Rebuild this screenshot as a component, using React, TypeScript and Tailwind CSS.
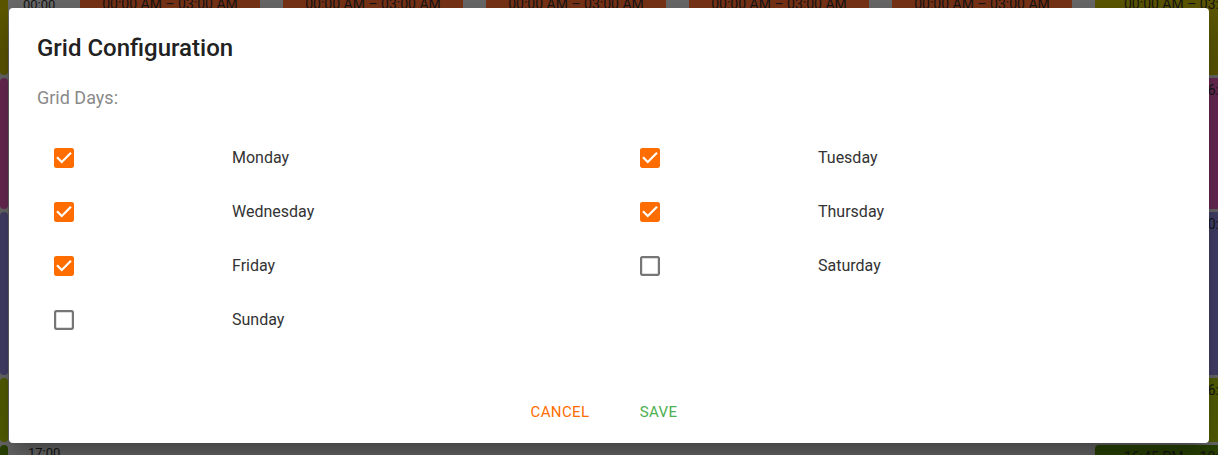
import { useState } from 'react';

const days = [
  { name: 'Monday', on: true },
  { name: 'Tuesday', on: true },
  { name: 'Wednesday', on: true },
  { name: 'Thursday', on: true },
  { name: 'Friday', on: true },
  { name: 'Saturday', on: false },
  { name: 'Sunday', on: false },
];

function CheckIcon({ checked }: { checked: boolean }) {
  if (checked) {
    return (
      <svg viewBox="3 3 18 18" width="20" height="20" className="text-[#ff6d00]" fill="currentColor">
        <path d="M19 3H5c-1.11 0-2 .9-2 2v14c0 1.1.89 2 2 2h14c1.11 0 2-.9 2-2V5c0-1.1-.89-2-2-2zm-9 14l-5-5 1.41-1.41L10 14.17l7.59-7.59L19 8l-9 9z" />
      </svg>
    );
  }
  return (
    <svg viewBox="3 3 18 18" width="20" height="20" className="text-[#767676]" fill="currentColor">
      <path d="M19 5v14H5V5h14m0-2H5c-1.1 0-2 .9-2 2v14c0 1.1.9 2 2 2h14c1.1 0 2-.9 2-2V5c0-1.1-.9-2-2-2z" />
    </svg>
  );
}

// 背景里被遮住的排班表
function StripColumn({ withText }: { withText?: boolean }) {
  const cells = [
    { h: 'h-[83px]', bg: 'bg-[#5e5800]', a: '00:00 AM – 03:00 AM', b: 'TOTAL' },
    { h: 'h-[131px]', bg: 'bg-[#6c2a55]', a: '03:00 AM – 06:00', b: 'Posts' },
    { h: 'h-[163px]', bg: 'bg-[#45416c]', a: '06:15 AM – 10:15', b: 'daily' },
    { h: 'h-[64px]', bg: 'bg-[#566000]', a: '10:45 AM – 16:45', b: 'NIGHT' },
    { h: 'h-[40px]', bg: 'bg-[#2b4500]', a: '16:45 PM – 10:15', b: '' },
  ];
  return (
    <div className="flex flex-col gap-[3px]">
      {cells.map((c, i) => (
        <div key={i} className={`${c.h} ${c.bg} rounded-[4px] overflow-hidden text-[14px] leading-[19px] text-[#161616]`}>
          {withText && (
            <div className="pl-[29px] pt-[3px] whitespace-nowrap">
              <div>{c.a}</div>
              <div>{c.b}</div>
            </div>
          )}
        </div>
      ))}
    </div>
  );
}

function BrownColumn() {
  return (
    <div className="w-[180px] shrink-0 flex flex-col gap-[3px]">
      <div className="h-[200px] bg-[#7b3418] rounded-[4px] text-center text-[14px] leading-[19px] pt-[3px] text-[#161616] whitespace-nowrap">
        00:00 AM – 03:00 AM
      </div>
      <div className="h-[70px] bg-[#7b3418] rounded-[4px]" />
      <div className="h-[170px] bg-[#4b3700] rounded-[4px]" />
    </div>
  );
}

export default function App() {
  const [checked, setChecked] = useState(days.map((d) => d.on));

  return (
    <div className="relative w-[1218px] h-[455px] overflow-hidden bg-[#6b6b6b] font-['Roboto',_'Liberation_Sans',_sans-serif]">
      {/* 背景网格 */}
      <div className="flex -mt-[8px]">
        <div className="w-[8px] shrink-0 overflow-hidden flex justify-end">
          <div className="w-[8px] shrink-0">
            <StripColumn />
          </div>
        </div>
        <div className="w-[72px] shrink-0 flex flex-col justify-between h-[471px] text-[13px] leading-[20px] text-[#161616]">
          <div className="pl-[15px] pt-[3px]">00:00</div>
          <div className="pl-[20px]">17:00</div>
        </div>
        <div className="flex shrink-0 gap-[23px]">
          <BrownColumn />
          <BrownColumn />
          <BrownColumn />
          <BrownColumn />
          <BrownColumn />
          <div className="w-[180px] shrink-0">
            <StripColumn withText />
          </div>
        </div>
      </div>

      {/* 弹窗 */}
      <div className="absolute left-[9px] top-[8px] w-[1200px] h-[435px] bg-white rounded-[4px] shadow-[0_11px_15px_-7px_rgba(0,0,0,0.2),0_24px_38px_3px_rgba(0,0,0,0.14),0_9px_46px_8px_rgba(0,0,0,0.12)] flex flex-col px-7 pt-6 pb-[13px]">
        <h2 className="text-[24px] leading-8 font-medium text-[#212121]">Grid Configuration</h2>
        <div className="mt-[22px] text-[18px] leading-6 text-[#8a8a8a]">Grid Days:</div>
        <div className="mt-[21px] grid grid-cols-[586px_586px]">
          {days.map((d, i) => (
            <div key={d.name} className="h-[54px] flex items-center">
              <button
                className="w-[195px] pl-[17px] flex items-center"
                onClick={() => setChecked((c) => c.map((v, j) => (j === i ? !v : v)))}
              >
                <CheckIcon checked={checked[i]} />
              </button>
              <span className="text-base text-[#333333]">{d.name}</span>
            </div>
          ))}
        </div>
        <div className="mt-auto flex justify-center gap-[29px] pr-[5px]">
          <button className="h-9 min-w-16 px-2 text-[15px] font-normal uppercase tracking-[0.4px] text-[#ff6d00]">Cancel</button>
          <button className="h-9 min-w-16 px-2 text-[15px] font-normal uppercase tracking-[0.4px] text-[#4caf50]">Save</button>
        </div>
      </div>
    </div>
  );
}
